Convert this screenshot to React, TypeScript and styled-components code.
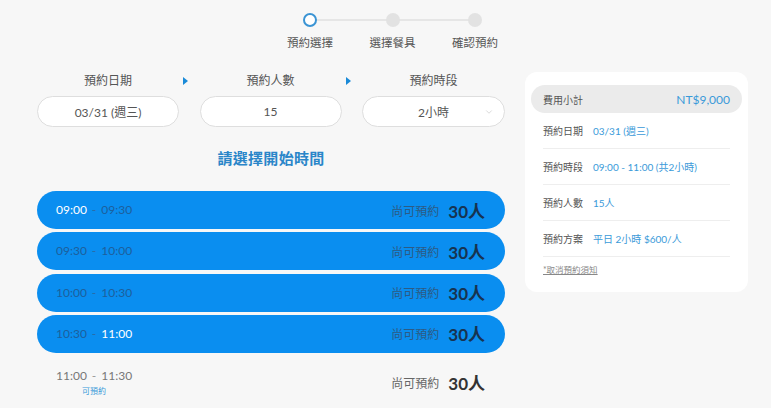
import styled, { createGlobalStyle } from 'styled-components'
import { ChevronDown } from 'lucide-react'

const GlobalStyle = createGlobalStyle`
  html, body {
    margin: 0;
    padding: 0;
    background: #f7f7f7;
  }
  body {
    font-family: 'Lato', 'Noto Sans CJK TC', sans-serif;
    color: #555;
  }
`

const Page = styled.div`
  width: 771px;
  height: 408px;
  overflow: hidden;
`

const Stepper = styled.div`
  display: flex;
  justify-content: center;
  padding: 13px 0 0 14px;
  height: 70px;
  box-sizing: border-box;
`

const Step = styled.div<{ first?: boolean }>`
  position: relative;
  width: 82.5px;
  display: flex;
  flex-direction: column;
  align-items: center;
  &::before {
    content: '';
    display: ${(p) => (p.first ? 'none' : 'block')};
    position: absolute;
    top: 6px;
    right: 50%;
    width: 82.5px;
    height: 2px;
    background: #e6e6e6;
  }
`

const Dot = styled.div<{ active?: boolean }>`
  position: relative;
  z-index: 1;
  width: 14px;
  height: 14px;
  box-sizing: border-box;
  border-radius: 50%;
  background: ${(p) => (p.active ? '#fff' : '#e2e2e2')};
  border: ${(p) => (p.active ? '2px solid #3b94d4' : 'none')};
`

const StepLabel = styled.div`
  margin-top: 8px;
  font-size: 11.5px;
  line-height: 16px;
  color: #555;
  white-space: nowrap;
`

const Main = styled.div`
  display: flex;
  align-items: flex-start;
  padding-left: 37px;
  gap: 20px;
`

const Left = styled.div`
  width: 468px;
  display: flex;
  flex-direction: column;
`

const FieldGrid = styled.div`
  display: grid;
  grid-template-columns: 142px 142px 143px;
  column-gap: 20.5px;
`

const FieldLabel = styled.div<{ arrow?: boolean }>`
  position: relative;
  text-align: center;
  font-size: 12px;
  line-height: 18px;
  height: 18px;
  margin-top: 2px;
  color: #555;
  &::after {
    content: '';
    display: ${(p) => (p.arrow ? 'block' : 'none')};
    position: absolute;
    right: -9px;
    top: 5px;
    border-left: 5px solid #1a8ad8;
    border-top: 4px solid transparent;
    border-bottom: 4px solid transparent;
  }
`

const Field = styled.div`
  position: relative;
  margin-top: 6px;
  height: 31px;
  box-sizing: border-box;
  background: #fff;
  border: 1px solid #dedede;
  border-radius: 16px;
  display: flex;
  align-items: center;
  justify-content: center;
  font-size: 12px;
  color: #555;
`

const Caret = styled.span`
  position: absolute;
  right: 10px;
  top: 10px;
  color: #c4c4c4;
  display: flex;
`

const Title = styled.div`
  margin-top: 22px;
  text-align: center;
  font-size: 15px;
  font-weight: 700;
  line-height: 18px;
  color: #2a86c9;
  letter-spacing: 0.3px;
`

const SlotList = styled.div`
  margin-top: 24px;
  display: flex;
  flex-direction: column;
  gap: 3.3px;
`

const Slot = styled.div<{ selected?: boolean }>`
  height: ${(p) => (p.selected ? '38px' : '52px')};
  border-radius: 19px;
  background: ${(p) => (p.selected ? '#0a8ef0' : 'transparent')};
  display: flex;
  align-items: center;
  justify-content: space-between;
  padding: 0 20px 0 19px;
  box-sizing: border-box;
`

const TimeBlock = styled.div`
  display: flex;
  flex-direction: column;
  align-items: center;
`

const TimeLine = styled.div`
  font-size: 12px;
  line-height: 16px;
  white-space: nowrap;
`

const TimeText = styled.span<{ tone: 'white' | 'dim' | 'grey' }>`
  color: ${(p) => (p.tone === 'white' ? '#ffffff' : p.tone === 'dim' ? '#1d5f9c' : '#777')};
`

const Dash = styled.span<{ onBlue?: boolean }>`
  margin: 0 5px;
  color: ${(p) => (p.onBlue ? '#2a6aa5' : '#999')};
`

const SubNote = styled.div`
  margin-top: 2px;
  font-size: 8px;
  line-height: 11px;
  color: #3a9ad9;
`

const Avail = styled.div`
  display: flex;
  align-items: center;
  gap: 9px;
`

const AvailLabel = styled.span<{ onBlue?: boolean }>`
  font-size: 12px;
  color: ${(p) => (p.onBlue ? '#2d5b84' : '#666')};
`

const AvailCount = styled.span<{ onBlue?: boolean }>`
  font-size: 17px;
  font-weight: 700;
  color: ${(p) => (p.onBlue ? '#173350' : '#333')};
`

const Card = styled.div`
  margin-top: 2px;
  width: 223px;
  background: #fff;
  border-radius: 12px;
  padding: 13px 6px 16px;
  box-sizing: border-box;
`

const TotalBar = styled.div`
  height: 28px;
  border-radius: 14px;
  background: #ebebeb;
  display: flex;
  align-items: center;
  justify-content: space-between;
  padding: 0 12px;
`

const TotalLabel = styled.span`
  font-size: 10px;
  color: #555;
`

const TotalValue = styled.span`
  font-size: 12px;
  color: #3a9ad9;
`

const InfoRow = styled.div`
  margin: 0 12px;
  height: 36px;
  display: flex;
  align-items: center;
  border-bottom: 1px solid #eeeeee;
  box-sizing: border-box;
  font-size: 10px;
`

const InfoLabel = styled.span`
  width: 50px;
  flex-shrink: 0;
  color: #555;
`

const InfoValue = styled.span`
  color: #3a9ad9;
`

const Notice = styled.a`
  display: inline-block;
  margin: 6px 12px 0;
  font-size: 8.5px;
  color: #888;
  text-decoration: underline;
`

const slots = [
  { from: '09:00', to: '09:30', fromOn: true, toOn: false },
  { from: '09:30', to: '10:00', fromOn: false, toOn: false },
  { from: '10:00', to: '10:30', fromOn: false, toOn: false },
  { from: '10:30', to: '11:00', fromOn: false, toOn: true },
]

const info = [
  ['預約日期', '03/31 (週三)'],
  ['預約時段', '09:00 - 11:00 (共2小時)'],
  ['預約人數', '15人'],
  ['預約方案', '平日 2小時 $600/人'],
]

const App = () => {
  return (
    <Page>
      <GlobalStyle />
      <Stepper>
        <Step first>
          <Dot active />
          <StepLabel>預約選擇</StepLabel>
        </Step>
        <Step>
          <Dot />
          <StepLabel>選擇餐具</StepLabel>
        </Step>
        <Step>
          <Dot />
          <StepLabel>確認預約</StepLabel>
        </Step>
      </Stepper>

      <Main>
        <Left>
          <FieldGrid>
            <FieldLabel arrow>預約日期</FieldLabel>
            <FieldLabel arrow>預約人數</FieldLabel>
            <FieldLabel>預約時段</FieldLabel>
            <Field>03/31 (週三)</Field>
            <Field>15</Field>
            <Field>
              2小時
              <Caret>
                <ChevronDown size={10} strokeWidth={1.5} />
              </Caret>
            </Field>
          </FieldGrid>

          <Title>請選擇開始時間</Title>

          <SlotList>
            {slots.map((s) => (
              <Slot selected key={s.from}>
                <TimeLine>
                  <TimeText tone={s.fromOn ? 'white' : 'dim'}>{s.from}</TimeText>
                  <Dash onBlue>-</Dash>
                  <TimeText tone={s.toOn ? 'white' : 'dim'}>{s.to}</TimeText>
                </TimeLine>
                <Avail>
                  <AvailLabel onBlue>尚可預約</AvailLabel>
                  <AvailCount onBlue>30人</AvailCount>
                </Avail>
              </Slot>
            ))}
            <Slot>
              <TimeBlock>
                <TimeLine>
                  <TimeText tone="grey">11:00</TimeText>
                  <Dash>-</Dash>
                  <TimeText tone="grey">11:30</TimeText>
                </TimeLine>
                <SubNote>可預約</SubNote>
              </TimeBlock>
              <Avail>
                <AvailLabel>尚可預約</AvailLabel>
                <AvailCount>30人</AvailCount>
              </Avail>
            </Slot>
          </SlotList>
        </Left>

        <Card>
          <TotalBar>
            <TotalLabel>費用小計</TotalLabel>
            <TotalValue>NT$9,000</TotalValue>
          </TotalBar>
          {info.map(([k, v]) => (
            <InfoRow key={k}>
              <InfoLabel>{k}</InfoLabel>
              <InfoValue>{v}</InfoValue>
            </InfoRow>
          ))}
          <Notice>*取消預約須知</Notice>
        </Card>
      </Main>
    </Page>
  )
}

export default App
